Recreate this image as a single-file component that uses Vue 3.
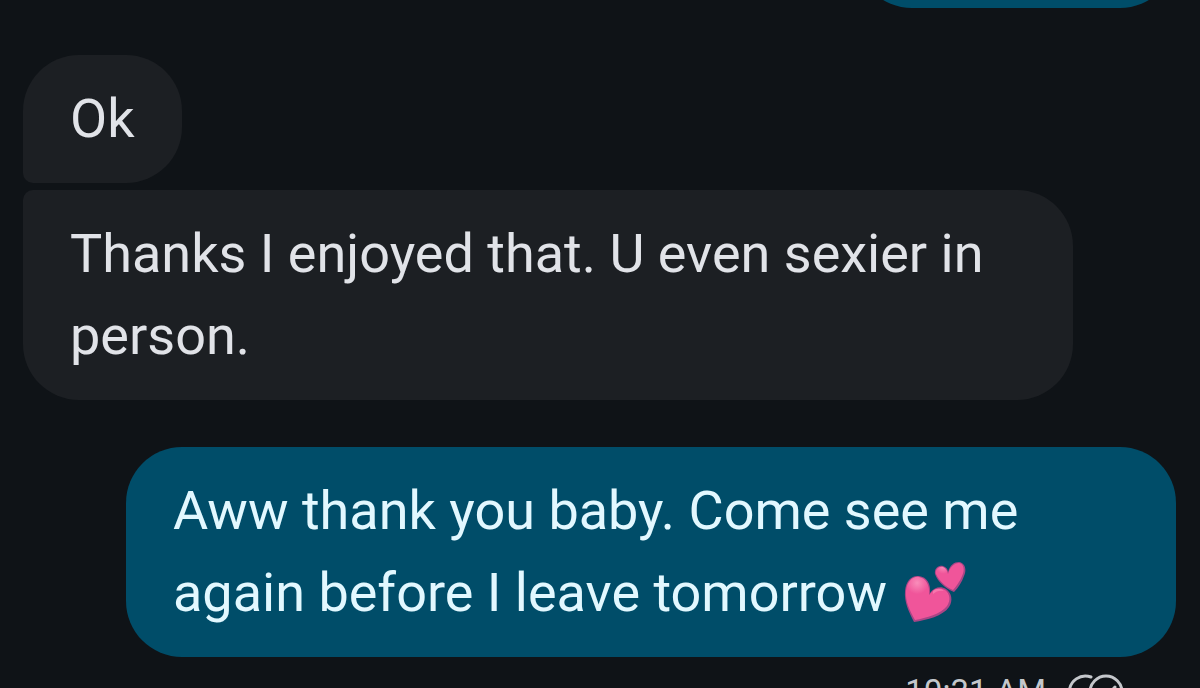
<script setup>
const messages = [
  { id: 1, side: 'sent', text: '', shape: 'previous' },
  { id: 2, side: 'received', text: 'Ok', shape: 'first' },
  { id: 3, side: 'received', text: 'Thanks I enjoyed that. U even sexier in person.', shape: 'last' },
  { id: 4, side: 'sent', text: 'Aww thank you baby. Come see me again before I leave tomorrow', shape: 'single', hearts: true },
]
</script>

<template>
  <main class="thread">
    <div v-for="m in messages" :key="m.id" class="bubble" :class="[m.side, m.shape]">
      <p v-if="m.text" class="text">
        {{ m.text }}
        <svg v-if="m.hearts" class="hearts" viewBox="0 0 62 62" role="img" aria-label="two hearts">
          <defs>
            <radialGradient id="shine" cx="0.26" cy="0.14" r="0.26">
              <stop offset="0" stop-color="#f98dba" />
              <stop offset="1" stop-color="#f0559a" />
            </radialGradient>
          </defs>
          <path d="M10 61 C5 51 0 41 1 30 C2 19 8 14 15 15 C23 16 27 23 26 32 C30 26 37 25 42 28 C48 32 49 40 45 46 C39 55 23 59 10 61 Z" fill="#a94586" />
          <path d="M11 59 C6 50 1 40 2 30 C3 20 9 15 15 16 C22 17 26 24 25 34 C30 27 36 26 41 29 C46 33 47 39 43 45 C37 53 22 57 11 59 Z" fill="url(#shine)" />
          <path d="M29 30 C32 27 37 27 40 30 C36 29 32 30 29 33 Z" fill="#f777ad" />
          <path d="M50 31 C41 27 34 21 31 13 C30 7 35 4 39 5 C42 6 44 8 44 11 C46 4 50 1 55 1 C61 2 63 8 60 15 C58 21 54 27 50 31 Z" fill="#a94586" />
          <path d="M49 29 C42 26 35 20 32 13 C31 8 35 5 39 6 C42 7 43 9 44 13 C46 6 50 2 55 2 C60 3 61 9 58 15 C56 20 52 26 49 29 Z" fill="url(#shine)" />
        </svg>
      </p>
    </div>
    <footer class="status">
      <time>10:31 AM</time>
      <svg class="receipt" viewBox="0 0 56 36" role="img" aria-label="Read">
        <g fill="none" stroke="#c4c7cb" stroke-width="3" stroke-linecap="round">
          <path d="M23 3 A16 16 0 1 0 23 33" />
          <circle cx="38" cy="18" r="16" />
          <path d="M30 19 L36 25 L47 13" />
        </g>
      </svg>
    </footer>
  </main>
</template>

<style>
body {
  margin: 0;
  background: #0f1317;
}
</style>

<style scoped>
.thread {
  box-sizing: border-box;
  display: flex;
  flex-direction: column;
  height: 100vh;
  overflow: hidden;
  padding: 0 24px 0 23px;
  background: #0f1317;
  font-family: Roboto, "Noto Sans", sans-serif;
}

.bubble {
  box-sizing: border-box;
  flex: none;
  max-width: calc(100% - 103px);
  min-height: 128px;
  padding: 23px 47px;
  border-radius: 56px;
}

.received {
  align-self: flex-start;
  background: #1c1f23;
  color: #e1e3e8;
}

.sent {
  align-self: flex-end;
  background: #004d69;
  color: #e2f8ff;
}

.previous {
  width: 320px;
  margin-top: -120px;
}

.first {
  margin-top: 47px;
  border-bottom-left-radius: 10px;
}

.last {
  margin-top: 7px;
  border-top-left-radius: 10px;
}

.single {
  margin-top: 47px;
}

.text {
  margin: 0;
  font-size: 54px;
  line-height: 82px;
}

.hearts {
  width: 62px;
  height: 62px;
  margin-left: 4px;
  vertical-align: -12px;
}

.status {
  display: flex;
  flex: none;
  align-items: center;
  align-self: flex-end;
  gap: 22px;
  margin-top: 15px;
  padding-right: 52px;
  color: #c4c7cb;
  font-size: 33px;
  line-height: 40px;
}

.receipt {
  width: 56px;
  height: 36px;
}
</style>
